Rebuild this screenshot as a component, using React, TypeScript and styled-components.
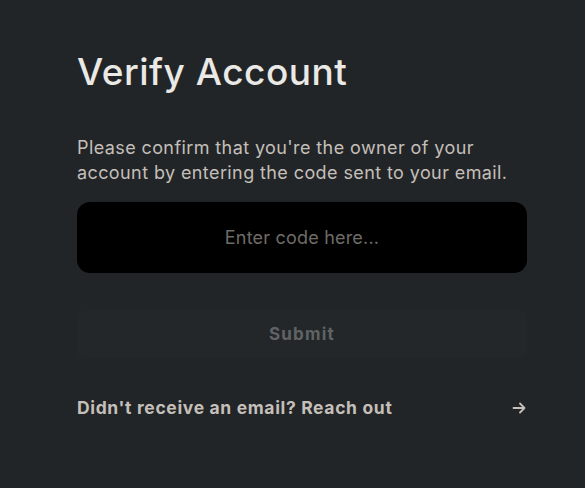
import styled, { createGlobalStyle } from "styled-components";

const GlobalStyle = createGlobalStyle`
  html, body {
    margin: 0;
    padding: 0;
    background: #222528;
  }
  body {
    font-family: Inter, "Open Sans", sans-serif;
  }
`;

const Page = styled.div`
  min-height: 488px;
  background: #222528;
  padding: 50px 58px 0 77px;
  box-sizing: border-box;
`;

const Card = styled.div`
  width: 450px;
  display: flex;
  flex-direction: column;
`;

const Title = styled.h1`
  margin: 0;
  font-size: 37px;
  font-weight: 500;
  color: #ebe9e5;
  letter-spacing: 0.5px;
  line-height: 44px;
`;

const Text = styled.p`
  margin: 41px 0 0;
  font-size: 18px;
  line-height: 25px;
  color: #c4bfb8;
  letter-spacing: 0.4px;
`;

const CodeInput = styled.input`
  margin-top: 17px;
  height: 69px;
  border: none;
  border-radius: 13px;
  background: #000;
  color: #e0ddd8;
  text-align: center;
  font-family: inherit;
  font-size: 18px;
  letter-spacing: 0.2px;
  outline: none;
  &::placeholder {
    color: #6f6c68;
  }
`;

const SubmitButton = styled.button`
  margin-top: 38px;
  height: 46px;
  border: none;
  border-radius: 6px;
  background: #242729;
  color: #606366;
  font-family: inherit;
  font-size: 17px;
  font-weight: 700;
  letter-spacing: 1.2px;
`;

const LinkRow = styled.a`
  margin-top: 40px;
  display: flex;
  align-items: center;
  justify-content: space-between;
  color: #c4bfb8;
  font-size: 17.5px;
  font-weight: 700;
  letter-spacing: 0.65px;
  text-decoration: none;
  cursor: pointer;
`;

const Arrow = () => (
  <svg width="16" height="16" viewBox="0 0 16 16" fill="none" stroke="#c4bfb8" strokeWidth="1.8" strokeLinecap="round" strokeLinejoin="round">
    <path d="M2.5 8h11M9 3.5 13.5 8 9 12.5" />
  </svg>
);

export default function App() {
  return (
    <Page>
      <GlobalStyle />
      <Card>
        <Title>Verify Account</Title>
        <Text>
          Please confirm that you're the owner of your account by entering the code sent to your email.
        </Text>
        <CodeInput placeholder="Enter code here..." />
        <SubmitButton disabled>Submit</SubmitButton>
        <LinkRow>
          Didn't receive an email? Reach out
          <Arrow />
        </LinkRow>
      </Card>
    </Page>
  );
}
